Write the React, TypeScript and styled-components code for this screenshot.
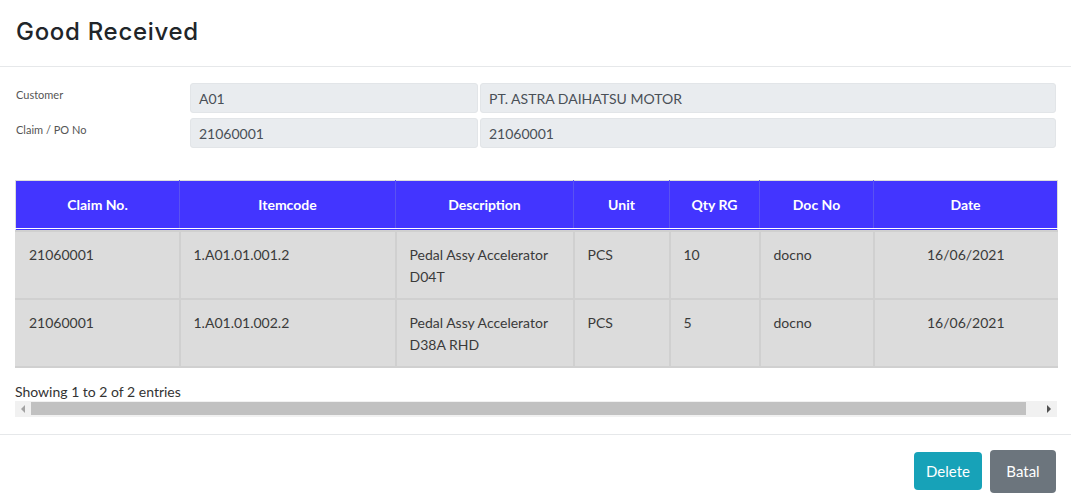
import React from "react";
import styled, { createGlobalStyle } from "styled-components";

const Global = createGlobalStyle`
  html, body { margin: 0; padding: 0; background: #fff; }
  body { font-family: Lato, "Open Sans", sans-serif; color: #333; }
  * { box-sizing: border-box; }
`;

const Modal = styled.div`
  width: 1071px;
  height: 502px;
  background: #fff;
  display: flex;
  flex-direction: column;
`;

const Header = styled.div`
  height: 67px;
  padding: 0 16px;
  display: flex;
  align-items: center;
  border-bottom: 1px solid #e6e8ea;
`;

const Title = styled.h1`
  margin: 0;
  font-family: Inter, "Noto Sans", sans-serif;
  font-weight: 500;
  font-size: 24px;
  color: #212529;
  letter-spacing: 0.7px;
  margin-top: -3px;
`;

const Body = styled.div`
  padding: 16px 15px 0 15px;
  display: flex;
  flex-direction: column;
`;

const FormGrid = styled.div`
  display: grid;
  grid-template-columns: 173px 288px 576px;
  column-gap: 2px;
  row-gap: 5px;
`;

const Label = styled.div`
  font-size: 11px;
  color: #555;
  padding-top: 5px;
  padding-left: 1px;
`;

const Field = styled.div`
  height: 30px;
  background: #e9ecef;
  border: 1px solid #e2e5e8;
  border-radius: 3px;
  padding: 0 8px;
  display: flex;
  align-items: center;
  font-size: 14px;
  color: #495057;
`;

const Table = styled.table`
  margin-top: 32px;
  width: 1042px;
  border-collapse: collapse;
  table-layout: fixed;
  border: 1px solid #dcdcdc;
`;

const HeadCell = styled.th`
  height: 48px;
  background: #4335ff;
  color: #fff;
  font-weight: 700;
  font-size: 14px;
  text-align: center;
  border-left: 1px solid #5a52f2;
  border-bottom: 1px solid #fff;
  padding: 0 0 1px 0;
  &:first-child { border-left: none; }
`;

const HeadBar = styled.tr`
  td { background: #4335ff; padding: 0; height: 2px; }
`;

const Cell = styled.td<{ $center?: boolean }>`
  background: #dcdcdc;
  height: 68px;
  vertical-align: top;
  padding: 12px 13px 0 13px;
  font-size: 14px;
  line-height: 22px;
  color: #3a3a3a;
  text-align: ${(p) => (p.$center ? "center" : "left")};
  border: 2px solid #d0d0d0;
  &:first-child { border-left: none; }
  &:last-child { border-right: none; }
`;

const Info = styled.div`
  margin-top: 15px;
  font-size: 14px;
  color: #333;
  line-height: 18px;
`;

const ScrollTrack = styled.div`
  width: 1042px;
  height: 16px;
  background: #f1f1f1;
  display: flex;
  align-items: center;
`;

const ScrollArrow = styled.div`
  width: 16px;
  height: 16px;
  display: flex;
  align-items: center;
  justify-content: center;
`;

const ScrollThumb = styled.div`
  flex: 1;
  height: 13px;
  background: #c1c1c1;
  margin-right: 15px;
`;

const Footer = styled.div`
  margin-top: 17px;
  border-top: 1px solid #e6e8ea;
  flex: 1;
  display: flex;
  justify-content: flex-end;
  align-items: center;
  gap: 8px;
  padding: 6px 15px 0 0;
`;

const Button = styled.button<{ $variant: "info" | "secondary" }>`
  font-family: Lato, sans-serif;
  font-size: 15px;
  color: #fff;
  border: none;
  border-radius: 4px;
  cursor: pointer;
  background: ${(p) => (p.$variant === "info" ? "#17a2b8" : "#6c757d")};
  height: ${(p) => (p.$variant === "info" ? "38px" : "43px")};
  width: ${(p) => (p.$variant === "info" ? "68px" : "66px")};
  padding: 0;
`;

const columns = [
  { title: "Claim No.", w: 164 },
  { title: "Itemcode", w: 216 },
  { title: "Description", w: 178 },
  { title: "Unit", w: 96 },
  { title: "Qty RG", w: 90 },
  { title: "Doc No", w: 114 },
  { title: "Date", w: 184 },
];

const rows = [
  ["21060001", "1.A01.01.001.2", "Pedal Assy Accelerator D04T", "PCS", "10", "docno", "16/06/2021"],
  ["21060001", "1.A01.01.002.2", "Pedal Assy Accelerator D38A RHD", "PCS", "5", "docno", "16/06/2021"],
];

export default function App() {
  return (
    <>
      <Global />
      <Modal>
        <Header>
          <Title>Good Received</Title>
        </Header>
        <Body>
          <FormGrid>
            <Label>Customer</Label>
            <Field>A01</Field>
            <Field>PT. ASTRA DAIHATSU MOTOR</Field>
            <Label>Claim / PO No</Label>
            <Field>21060001</Field>
            <Field>21060001</Field>
          </FormGrid>
          <Table>
            <colgroup>
              {columns.map((c) => (
                <col key={c.title} style={{ width: c.w }} />
              ))}
            </colgroup>
            <thead>
              <tr>
                {columns.map((c) => (
                  <HeadCell key={c.title}>{c.title}</HeadCell>
                ))}
              </tr>
              <HeadBar>
                <td colSpan={7} />
              </HeadBar>
            </thead>
            <tbody>
              {rows.map((r, i) => (
                <tr key={i}>
                  {r.map((v, j) => (
                    <Cell key={j} $center={j === 6}>
                      {v}
                    </Cell>
                  ))}
                </tr>
              ))}
            </tbody>
          </Table>
          <Info>Showing 1 to 2 of 2 entries</Info>
          <ScrollTrack>
            <ScrollArrow>
              <svg width="6" height="8" viewBox="0 0 6 8">
                <path d="M5 0 L1 4 L5 8 Z" fill="#a3a3a3" />
              </svg>
            </ScrollArrow>
            <ScrollThumb />
            <ScrollArrow>
              <svg width="6" height="8" viewBox="0 0 6 8">
                <path d="M1 0 L5 4 L1 8 Z" fill="#505050" />
              </svg>
            </ScrollArrow>
          </ScrollTrack>
        </Body>
        <Footer>
          <Button $variant="info">Delete</Button>
          <Button $variant="secondary">Batal</Button>
        </Footer>
      </Modal>
    </>
  );
}
